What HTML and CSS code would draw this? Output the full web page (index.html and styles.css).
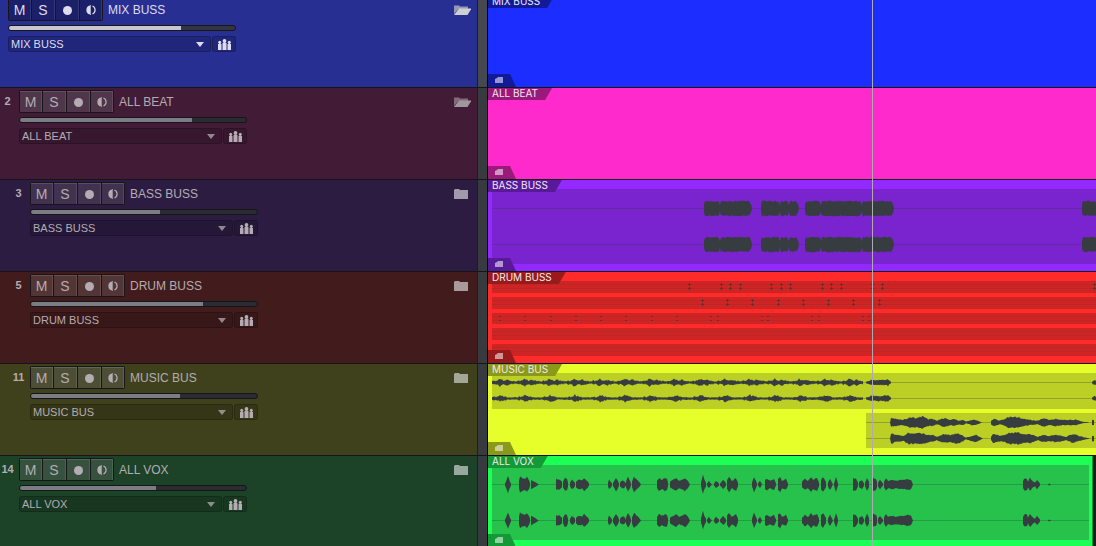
FILE: index.html
```html
<!DOCTYPE html>
<html lang="en">
<head>
<meta charset="utf-8">
<title>Arrange view</title>
<link rel="stylesheet" href="styles.css">
</head>
<body>
<svg class="symbols" aria-hidden="true">
  <symbol id="half" viewBox="0 0 10 10"><path d="M4 0.500A4.600 4.600 0 0 0 4 9.500Z" fill="currentColor"/><path d="M4.500 0V10" stroke="currentColor" opacity=".7"/><path d="M6.500 1A4.400 4.400 0 0 1 6.500 9" fill="none" stroke="currentColor" stroke-width="1.200"/></symbol>
  <symbol id="people" viewBox="0 0 13 11"><path d="M0 5h3.500v6H0zM4.500 4h4v7h-4zM9.500 5H13v6H9.500z" fill="currentColor"/><path d="M1 4h1.500v2H1zM5.700 2h1.600v3H5.700zM10.500 4H12v2h-1.500z" fill="currentColor"/><circle cx="1.700" cy="3.200" r="1.500" fill="currentColor"/><circle cx="6.500" cy="1.900" r="1.900" fill="currentColor"/><circle cx="11.300" cy="3.200" r="1.500" fill="currentColor"/></symbol>
  <symbol id="closed" viewBox="0 0 17 10"><path d="M0 1L1 0H5L6 1H14V10H0Z" fill="currentColor"/></symbol>
  <symbol id="open" viewBox="0 0 17 10"><path d="M0 0.500H5L6 1.500H14V4H4.500L0 9Z" fill="currentColor" opacity=".65"/><path d="M5 3.500H17.500L13.500 10H0Z" fill="currentColor"/></symbol>
  <symbol id="mini" viewBox="0 0 8 6"><path d="M0 2L2 1L3 0H8V6H0Z" fill="currentColor"/></symbol>
</svg>
<main class="arrange" id="arrange"></main>
<script src="app.js"></script>
</body>
</html>
```
FILE: styles.css
```css
* { box-sizing: border-box; }
body { margin: 0; background: #1c1e1e; font-family: "Liberation Sans", Arial, sans-serif; overflow: hidden; }
.symbols { display: none; }
.arrange { position: relative; height: 100vh; overflow: hidden; }
.track { display: grid; grid-template-columns: 478px 10px minmax(0, 1fr); height: 92px; }
.track:first-child { margin-top: -4px; }

.mix { --head: #272f93; --clip: #1c2dff; --lane: #1a28cc; --tag: #121a99; --fg: #dcdcec; --fill: #c8c8cc; --rail: #34363f; --gutter: #464850; --btn: #1b2068; --box: #20267a; --icon: #d0d0d0; }
.beat { --head: #421c37; --clip: #ff2acb; --lane: #cf24a5; --tag: #991a7a; --btn: #50364a; }
.bass { --head: #2d1c42; --clip: #922aff; --lane: #7a24cf; --tag: #581a99; --btn: #41334f; --icon: #a09aaa; }
.drum { --head: #421c1c; --clip: #ff2a2a; --lane: #cf2424; --tag: #991a1a; --btn: #523636; --icon: #a89a9a; }
.music { --head: #3e411c; --clip: #e6ff2a; --lane: #bccf24; --tag: #8a991a; --btn: #4c4f36; --icon: #a4a698; }
.vox { --head: #1c4227; --clip: #1cff55; --lane: #26c24c; --tag: #139935; --btn: #36523f; --icon: #98a89e; }

.header { display: flex; align-items: flex-start; padding: 2px 6px 0 0; background: var(--head); border-right: 1px solid #1c1c22; border-bottom: 1px solid #16161a; color: var(--fg, #b4acb2); }
.depth-0 { padding-left: 8px; }
.depth-2 { padding-left: 11px; }
.number { width: 15px; margin-right: 4px; padding-top: 5px; font-size: 11px; line-height: 13px; font-weight: bold; text-align: center; }
.depth-0 .number { display: none; }
.controls { width: 228px; }
.top { display: flex; gap: 5px; height: 23px; white-space: nowrap; }
.name { font-size: 12px; line-height: 25px; }
.buttons { display: grid; grid-template-columns: 22px 23px 23px 22px; gap: 1px; width: 95px; height: 23px; padding: 1px; background: #17141a; border-radius: 2px; flex: none; }
.buttons button { display: flex; align-items: center; justify-content: center; padding: 0; border: 0; border-top: 1px solid rgba(255, 255, 255, 0.13); border-right: 1px solid rgba(255, 255, 255, 0.1); background: var(--btn); color: inherit; font: 14px/20px "Liberation Sans", Arial, sans-serif; }
.buttons svg { width: 10px; height: 10px; }
.dot { width: 9px; height: 9px; border-radius: 50%; background: currentColor; }
.fader { display: block; appearance: none; width: 228px; height: 6px; margin: 4px 0 5px; border: 1px solid #15161a; border-radius: 3px; background: linear-gradient(90deg, var(--fill, #7c7c84) var(--level), var(--rail, #2a2c31) var(--level)); }
.fader::-webkit-slider-thumb { appearance: none; width: 1px; height: 1px; }
.output { display: flex; gap: 1px; height: 16px; }
.picker { position: relative; flex: 1; }
.picker::after { content: ""; position: absolute; right: 7px; top: 6px; border: 4px solid transparent; border-top: 5px solid currentColor; border-bottom: 0; opacity: .75; pointer-events: none; }
.mix .picker::after { opacity: 1; }
.picker select { appearance: none; display: block; width: 100%; height: 16px; padding: 0 20px 0 2px; border: 1px solid rgba(0, 0, 0, 0.2); border-radius: 3px; background: var(--box, rgba(0, 0, 0, 0.16)); color: inherit; font: 11px/14px "Liberation Sans", Arial, sans-serif; }
.group { display: flex; align-items: center; justify-content: center; width: 24px; padding: 0; border: 1px solid rgba(0, 0, 0, 0.2); border-radius: 3px; background: var(--box, rgba(0, 0, 0, 0.16)); color: inherit; }
.group svg { width: 13px; height: 11px; }
.folder { margin: 7px 0 0 auto; padding: 0; border: 0; background: none; color: var(--icon, #a0969c); line-height: 0; }
.folder svg { width: 17px; height: 10px; overflow: visible; }
.gutter { background: var(--gutter, #373a3e); border-right: 1px solid #050507; border-bottom: 1px solid #16161a; }
.timeline { border-bottom: 1px solid #16161a; background: #1c1e1e; }
.clip { position: relative; display: flex; flex-direction: column; gap: 4px; height: 91px; padding: 9px 0 7px 4px; background: var(--clip); overflow: hidden; }
.vox .clip { margin-right: 3px; padding-right: 3px; border-right: 1px solid #139935; }
.lane { flex: 1; min-height: 0; background: var(--lane); overflow: hidden; }
.lane svg { display: block; width: 100%; height: 100%; }
.lane.late { margin-left: 374px; }
.axis { stroke: #303c40; stroke-opacity: .3; }
.drum .axis { stroke-opacity: .13; }
.wave { fill: #373c40; }
.hit { fill: #4a3638; opacity: .85; shape-rendering: crispEdges; }
.tag { position: absolute; left: 0; top: 0; height: 12px; padding: 0 14px 0 4px; background: var(--tag); color: #f0eaf0; font: 10px/10px Inter, "Liberation Sans", sans-serif; clip-path: polygon(0 0, 100% 0, calc(100% - 7px) 100%, 0 100%); }
.corner { position: absolute; left: 0; bottom: 0; width: 28px; height: 13px; padding: 3px 0 0 7px; background: var(--tag); color: rgba(255, 255, 255, 0.55); line-height: 0; clip-path: polygon(0 0, 22px 0, 100% 100%, 0 100%); }
.corner svg { width: 8px; height: 6px; }
.playhead { position: absolute; left: 872px; top: 0; bottom: 0; width: 1px; background: #b0aab0; }
```
FILE: app.js
```js
const noise = (x, seed) => {
  const v = Math.sin(x * 12.9898 + seed * 78.233) * 43758.5453;
  return v - Math.floor(v);
};

// Each blob is a list of x, amplitude pairs; the result is mirrored about the axis.
function wavePath(blob, y, seed, rough) {
  const up = [], down = [];
  for (let i = 0; i < blob.length - 2; i += 2) {
    const [x0, h0, x1, h1] = blob.slice(i, i + 4);
    for (let x = x0; x <= x1; x++) {
      const h = h0 + (h1 - h0) * (x - x0) / Math.max(1, x1 - x0);
      up.push(`${x} ${(y - h * (1 - rough * noise(x, seed))).toFixed(1)}`);
      down.unshift(`${x} ${(y + h * (1 - rough * noise(x, seed + 3))).toFixed(1)}`);
    }
  }
  return `<path class="wave" d="M${up.concat(down).join("L")}Z"/>`;
}

const axis = y => `<line class="axis" x1="0" x2="100%" y1="${y}" y2="${y}"/>`;

function stereo(blobs, ys, rough) {
  return ys.map((y, i) => axis(y) + (Array.isArray(blobs[0][0]) ? blobs[i] : blobs)
    .map(b => wavePath(b, y, i + 1, rough)).join("")).join("");
}

const bass = [[212, 228], [228, 260], [269, 288], [288, 297], [297, 307], [313, 329], [329, 370], [370, 402], [590, 605]]
  .map(([a, b]) => [260, 307, 402].includes(b)
    ? [a, 4, a + 1, 8, b - 3, 8, b - 1, 5, b, 0]
    : [a, 4, a + 1, 8, b - 2, 8, b - 1, 7, b, 3]);

const vox = [
  [13,1,15,6,16,9,18,3,19,1], [27,4,28,9,30,7,33,6,35,8,37,5,38,2], [39,5,41,4,44,2,47,0],
  [64,6,66,5,67,6,69,4,70,3], [71,3,73,7,75,6,76,2], [78,2,80,5,82,3,83,2], [84,3,86,5,89,5,90,4,92,7,94,5,96,3,97,1],
  [116,2,117,5,119,3,120,1], [121,2,124,7,126,4,127,1], [128,2,130,4,132,4,134,1], [134,3,136,8,138,4,139,1], [140,3,142,8,145,5,147,3,149,0],
  [165,4,167,7,170,5,173,7,175,6,176,2], [178,3,181,5,184,7,187,4,190,5,193,7,196,4,198,0],
  [209,2,211,10,212,6,214,2], [215,1,217,4,219,1,220,0], [222,1,224,4,227,1], [228,1,231,5,233,3,234,1], [235,5,237,8,240,4,244,7,246,2],
  [260,2,262,8,263,6,265,1], [266,1,268,4,270,0], [273,5,275,6,278,4,282,6,284,1], [286,6,288,8,290,4,294,6,296,1],
  [310,3,313,6,316,4,319,8,321,5,325,7,327,2], [329,5,331,8,334,3], [336,2,338,6,340,2,341,0], [342,1,344,8,346,1],
  [361,7,364,6,366,2], [367,3,370,5,372,1], [373,2,375,7,377,3],
  [381,7,384,6,385,3], [386,2,388,5,391,1], [392,3,394,7,396,4,400,5,404,4,408,5,412,5,416,6,419,5,421,0],
  [531,4,533,7,535,6,536,3,538,7,541,3,543,2,545,5,548,1], [556,0,557,1,559,0]
];

// One 25px bar of the repeating riff, as amplitudes per pixel.
const bar = [1, 2, 2, 1, 2, 2, 3, 4, 4, 3, 3, 2, 2, 2, 3, 3, 3, 2, 2, 2, 1, 2, 1, 1, 1];
const gentle = [1, 1, 2, 2, 1, 2, 2, 3, 4, 3, 3, 3, 2, 2, 2, 1, 1, 1, 1, 1, 1, 1, 1, 1, 1];

function riff(shape, shift) {
  const blob = [];
  for (let x = 0; x <= 371; x++) blob.push(x, shape[(x + shift) % shape.length] + .4);
  return [blob, [374,1,379,3,384,3,391,3,396,4,399,1], [600,1,602,3,605,2]];
}

const verse = [
  [24,0,25,5,30,4,36,3,40,4,45,6,51,5,57,7,62,4,67,4,71,2,78,5,84,3,88,4,93,2,97,3,100,1,106,3,110,3,116,0],
  [125,2,128,4,134,2,139,4,143,6,152,6,157,4,164,3,172,2,177,5,183,3,190,4,200,3,210,3,216,1,224,0],
  [226,3,228,3]
];
const verseLow = [
  [24,0,25,6,30,4,38,3,42,6,50,6,57,6,62,4,67,4,71,2,78,5,84,4,91,6,97,3,100,1,106,3,110,4,117,0],
  [125,2,127,5,134,3,139,4,143,6,152,7,157,5,164,5,172,2,177,4,183,3,190,4,200,2,207,5,216,2,224,0],
  [226,3,228,3]
];

const hits = (xs, size) => axis(3.5) + axis(7.5) + xs.map(x => [3, 7].map(y => size > 2
  ? `<path class="hit" d="M${x - 1} ${y}h1v-1h1v1h1v1h-1v1h-1v-1h-1z"/>`
  : `<path class="hit" d="M${x - 1} ${y}h2v1h-2z"/>`).join("")).join("");

const drums = [
  hits([197, 229, 238, 248, 279, 289, 298, 330, 339, 349, 380, 390, 602], 3),
  hits([210, 235, 260, 286, 311, 336, 361, 387], 3),
  hits([8, 33, 59, 84, 109, 134, 160, 185, 219, 226, 270, 276, 320, 327, 371, 377], 2),
  hits([], 2), hits([], 2)
];

const lane = (content, extra = "") => `<div class="lane ${extra}"><svg>${content}</svg></div>`;
const tracks = [
  { kind: "mix", number: 1, name: "MIX BUSS", depth: 0, level: 76, icon: "open", lanes: "" },
  { kind: "beat", number: 2, name: "ALL BEAT", depth: 1, level: 76, icon: "open", lanes: "" },
  { kind: "bass", number: 3, name: "BASS BUSS", depth: 2, level: 57, icon: "closed", lanes: lane(stereo(bass, [19.5, 55.5], .18)) },
  { kind: "drum", number: 5, name: "DRUM BUSS", depth: 2, level: 76, icon: "closed", lanes: drums.map(d => lane(d)).join("") },
  { kind: "music", number: 11, name: "MUSIC BUS", depth: 2, level: 66, icon: "closed",
    lanes: lane(stereo([riff(bar, 0), riff(gentle, 0)], [9.5, 25.5], .4)) + lane(stereo([verse, verseLow], [9.5, 25.5], .25), "late") },
  { kind: "vox", number: 14, name: "ALL VOX", depth: 1, level: 60, icon: "closed", lanes: lane(stereo(vox, [19.5, 55.5], .15)) }
];

const use = id => `<svg aria-hidden="true"><use href="#${id}"/></svg>`;

document.getElementById("arrange").innerHTML = tracks.map(t => `
<section class="track ${t.kind}">
  <div class="header depth-${t.depth}">
    <span class="number">${t.number}</span>
    <div class="controls">
      <div class="top">
        <div class="buttons">
          <button type="button" aria-label="Mute">M</button>
          <button type="button" aria-label="Solo">S</button>
          <button type="button" aria-label="Record"><span class="dot"></span></button>
          <button type="button" aria-label="Monitor">${use("half")}</button>
        </div>
        <span class="name">${t.name}</span>
      </div>
      <input class="fader" type="range" aria-label="${t.name} volume" value="${t.level}" style="--level:${t.level}%">
      <div class="output">
        <div class="picker"><select aria-label="${t.name} channel"><option>${t.name}</option></select></div>
        <button class="group" type="button" aria-label="Group">${use("people")}</button>
      </div>
    </div>
    <button class="folder" type="button" aria-label="Folder">${use(t.icon)}</button>
  </div>
  <div class="gutter"></div>
  <div class="timeline">
    <div class="clip">${t.lanes}<span class="tag">${t.name}</span><span class="corner">${use("mini")}</span></div>
  </div>
</section>`).join("") + `<div class="playhead"></div>`;
```
